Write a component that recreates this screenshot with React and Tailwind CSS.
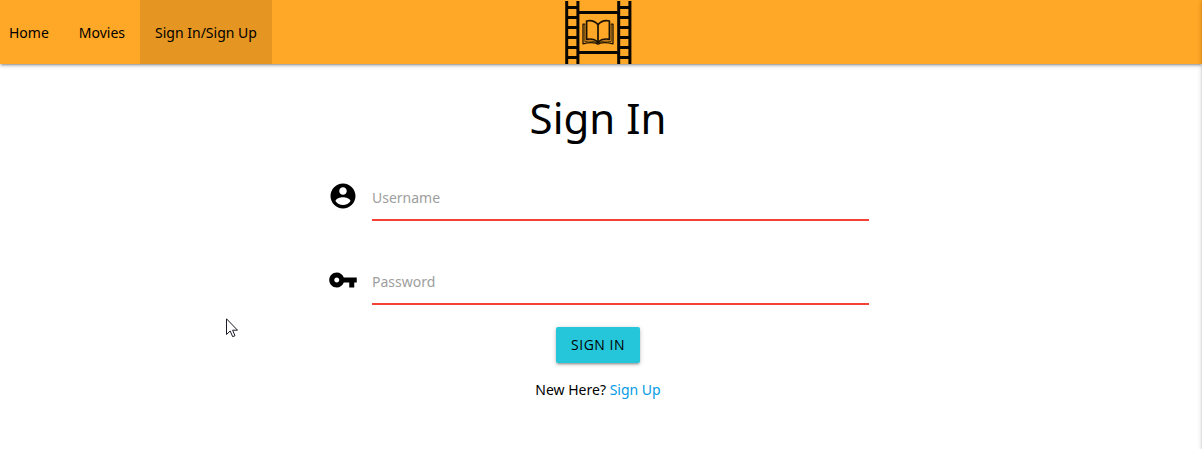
import React from "react";

const NAV_LINK = "flex h-16 items-center px-[15px] pt-0.5";

function Logo() {
  const rungs = [7, 17, 27, 37, 47, 57];
  return (
    <svg viewBox="0 0 68 64" className="h-16 w-[68px]" role="img" aria-label="Film strip with a book">
      <g fill="#0a0702">
        <rect x="1.2" y="1" width="3" height="63" />
        <rect x="12.4" y="1" width="3" height="63" />
        <rect x="53.2" y="1" width="3" height="63" />
        <rect x="64.4" y="1" width="3" height="63" />
        <rect x="14" y="11" width="40" height="3" />
        <rect x="14" y="51" width="40" height="3" />
        {rungs.map((y) => (
          <g key={y}>
            <rect x="3" y={y - 1} width="10" height="3" />
            <rect x="55" y={y - 1} width="10" height="3" />
          </g>
        ))}
      </g>
      <g fill="none" stroke="#1b1204" strokeWidth="1.7" strokeLinejoin="round" strokeLinecap="round">
        <path d="M34 24.6C31 21.2 27 20 22.6 21V39.4C27 38.4 31 39.4 34 42.2C37 39.4 41 38.4 45.4 39.4V21C41 20 37 21.2 34 24.6Z" />
        <path d="M34 24.6V42.5" />
        <path d="M20.6 24.2H19V43.8C24 42.4 28.500 42.200 32 43.200Q34 44.800 36 43.200C39.500 42.200 44 42.400 49 43.800V24.200H47.400" strokeWidth="1.3" />
        <path d="M20.800 25V41.600C25.400 40.600 30.400 41 34 43.300C37.600 41 42.600 40.600 47.200 41.600V25" strokeWidth="0.8" />
      </g>
    </svg>
  );
}

function Field({ id, label, type, icon }) {
  return (
    <div className="flex">
      <label htmlFor={id} aria-label={label} className="w-[45px] shrink-0 pt-[7px] pl-px">
        <svg viewBox="0 0 24 24" className="size-[30px] fill-black" aria-hidden="true">
          <path d={icon} />
        </svg>
      </label>
      <input
        id={id}
        type={type}
        placeholder={label}
        className="h-[47px] min-w-0 flex-1 border-b-2 border-[#f44336] bg-transparent pt-0.5 text-sm outline-none placeholder:text-[#9e9e9e]"
      />
    </div>
  );
}

const ACCOUNT =
  "M12 2C6.48 2 2 6.48 2 12s4.48 10 10 10 10-4.48 10-10S17.52 2 12 2zm0 3c1.66 0 3 1.34 3 3s-1.34 3-3 3-3-1.34-3-3 1.34-3 3-3zm0 14.2c-2.5 0-4.71-1.28-6-3.22.03-1.99 4-3.08 6-3.08 1.99 0 5.97 1.09 6 3.08-1.29 1.94-3.5 3.22-6 3.22z";
const KEY =
  "M12.65 10C11.83 7.67 9.61 6 7 6c-3.31 0-6 2.69-6 6s2.69 6 6 6c2.61 0 4.83-1.67 5.65-4H17v4h4v-4h2v-4H12.65zM7 14c-1.1 0-2-.9-2-2s.9-2 2-2 2 .9 2 2-.9 2-2 2z";

export default function App() {
  return (
    <div className="min-h-screen bg-white font-[Tahoma,'Noto_Sans',sans-serif] text-sm leading-6 text-black">
      <nav className="grid h-16 grid-cols-[1fr_auto_1fr] bg-[#ffa726] pr-1.5 shadow-[0_2px_2px_0_rgba(0,0,0,0.14),0_3px_1px_-2px_rgba(0,0,0,0.12),0_1px_5px_0_rgba(0,0,0,0.2)]">
        <ul className="flex">
          <li>
            <a href="#home" className="flex h-16 items-center pt-0.5 pr-[15px] pl-[9px]">Home</a>
          </li>
          <li>
            <a href="#movies" className={NAV_LINK}>Movies</a>
          </li>
          <li className="bg-black/10">
            <a href="#sign-in" className={NAV_LINK} aria-current="page">Sign In/Sign Up</a>
          </li>
        </ul>
        <a href="#home">
          <Logo />
        </a>
      </nav>

      <main className="pr-1.5">
        <div className="mx-auto flex max-w-[542px] flex-col items-center">
          <h1 className="mt-7 text-[42px] leading-[52px]">Sign In</h1>
          <form className="mt-[30px] flex w-full flex-col items-center" onSubmit={(e) => e.preventDefault()}>
            <div className="flex w-full flex-col gap-[37px]">
              <Field id="username" label="Username" type="text" icon={ACCOUNT} />
              <Field id="password" label="Password" type="password" icon={KEY} />
            </div>
            <button
              type="submit"
              className="mt-[22px] h-9 rounded-xs bg-[#26c6da] px-[15px] font-['Open_Sans',sans-serif] text-sm tracking-[0.5px] uppercase shadow-[0_2px_2px_0_rgba(0,0,0,0.14),0_3px_1px_-2px_rgba(0,0,0,0.12),0_1px_5px_0_rgba(0,0,0,0.2)]"
            >
              Sign In
            </button>
          </form>
          <p className="mt-[15px]">
            New Here? <a href="#sign-up" className="text-[#039be5]">Sign Up</a>
          </p>
        </div>
      </main>

      <aside
        aria-hidden="true"
        className="fixed inset-y-0 left-full w-72 bg-white shadow-[0_2px_2px_0_rgba(0,0,0,0.14),0_3px_1px_-2px_rgba(0,0,0,0.12),0_1px_5px_0_rgba(0,0,0,0.2)]"
      />
      <svg viewBox="0 0 12 20" className="pointer-events-none absolute top-[318px] left-[226px] h-5 w-3" aria-hidden="true">
        <path d="M.5 .8V16.500L4.200 13L6.700 18.700L9 17.700L6.600 12.200H11.500Z" fill="#fff" stroke="#1a1a26" strokeWidth="1" />
      </svg>
    </div>
  );
}
